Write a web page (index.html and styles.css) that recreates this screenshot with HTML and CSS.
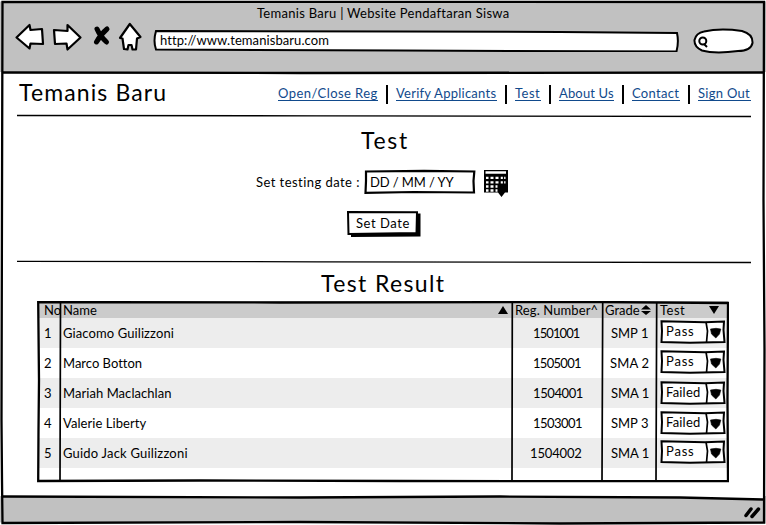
FILE: index.html
```html
<!DOCTYPE html>
<html lang="en">
<head>
<meta charset="utf-8">
<title>Temanis Baru | Website Pendaftaran Siswa</title>
<link rel="stylesheet" href="styles.css">
</head>
<body>
<div class="window">
  <header class="chrome">
    <div class="window-title"><span class="t-title">Temanis Baru | Website Pendaftaran Siswa</span></div>
    <div class="toolbar">
      <svg class="nav-icons" width="130" height="34" viewBox="14 20 130 34">
        <g fill="#fff" stroke="#000" stroke-width="2.200" stroke-linejoin="round">
          <path d="M16.500 37.500L29.500 25L30.500 30L42 29L43 44L30.500 43.500L29.500 48.500Z"/>
          <path d="M54 30L67.500 31L67.500 25L80.500 37.500L67.500 49.500L66.500 43.500L55 44Z"/>
          <path d="M129.800 24L140.500 37L137 38.500L136 49.500L132.500 49.500L131.500 45L128.500 45L127.500 49.500L124 49L122.500 38.500L120 38Z"/>
        </g>
        <path d="M97 29Q100 36 106.500 42M107 29Q101 34 96.500 42" fill="none" stroke="#000" stroke-width="5" stroke-linecap="round"/>
      </svg>
      <div class="address">
        <svg class="sketch" width="526" height="23" viewBox="153 29 526 23"><path d="M156 31L400 31.500L560 32L677 33Q679 42 676.500 51.500L400 50.500L156 49.500Q153 41 156 31Z" fill="#fff" stroke="#000" stroke-width="2"/></svg>
        <span class="t-url">http://www.temanisbaru.com</span>
      </div>
      <svg class="search" width="62" height="26" viewBox="692 28 62 26">
        <path d="M704 31.500Q720 28 742 31Q753 34 752.500 43Q751 51 738 51Q715 54 702 50.500Q694 47 694.500 40Q696 33 704 31.500Z" fill="#fff" stroke="#000" stroke-width="2"/>
        <circle cx="702.800" cy="41" r="3.500" fill="none" stroke="#000" stroke-width="2"/><path d="M704 44L707 47" stroke="#000" stroke-width="2"/>
      </svg>
    </div>
  </header>

  <main class="page">
    <div class="masthead">
      <h1 class="brand">Temanis Baru</h1>
      <nav class="menu">
        <a class="n-reg">Open/Close Reg</a><i></i><a class="n-verify">Verify Applicants</a><i></i><a class="n-test">Test</a><i></i><a class="n-about">About Us</a><i></i><a class="n-contact">Contact</a><i></i><a class="n-out">Sign Out</a>
      </nav>
    </div>
    <svg class="rule" width="734" height="4" viewBox="0 0 734 4"><path d="M0 1.500L300 1.800L734 2.500" stroke="#000" stroke-width="1.300"/></svg>

    <section class="schedule">
      <h2>Test</h2>
      <div class="date-row">
        <label>Set testing date :</label>
        <div class="date-field">
          <svg class="sketch" width="112" height="26" viewBox="0 0 112 26"><path d="M2 2.500L60 1.800L110.300 2.500L109.500 12L110 23.500L50 23L1.500 23.800L2 12Z" fill="#fff" stroke="#000" stroke-width="2.200"/></svg>
          <span class="t-date">DD / MM / YY</span>
        </div>
        <svg class="calendar" width="26" height="28" viewBox="0 0 26 28">
          <path d="M1 1H25V23.500H22L18.500 28L15 23.500H1Z"/>
          <path d="M2.500 3.500H23M3 8.800H5.500M7.500 8.800H10.500M12.500 8.800H15.500M17.500 8.800H22.500M3 13.300H5.500M7.500 13.300H10.500M12.500 13.300H15.500M17.500 13.300H22.500M3 17.500H5.500M7.500 17.500H10.500M12.500 17.500H14.500M3 21.500H5.500M7.500 21.500H10.500M12.500 21.500H14.500" stroke="#fff" stroke-width="2.300"/>
          <path d="M17 7V20" stroke="#000"/><path d="M20.500 7V16" stroke="#000" stroke-width="1.300"/>
        </svg>
      </div>
      <button class="set-date">
        <svg class="sketch" width="76" height="28" viewBox="0 0 76 28"><path d="M5 4L74.500 3.500V26.500L5 27Z"/><path d="M2 2L71 2.300L70.500 23L2.500 24Z" fill="#fff" stroke="#000" stroke-width="2"/></svg>
        <span>Set Date</span>
      </button>
    </section>
    <svg class="rule" width="734" height="4" viewBox="0 0 734 4"><path d="M0 1.300L300 1.800L734 2.500" stroke="#000" stroke-width="1.300"/></svg>

    <section class="results">
      <h2>Test Result</h2>
      <div class="table">
        <div class="row head">
          <div>No</div>
          <div><span>Name</span><svg class="sort-up" width="10" height="8"><path d="M0 8L5 0L10 8Z"/></svg></div>
          <div class="h-num">Reg. Number^</div>
          <div><span>Grade</span><svg class="sort-both" width="10" height="10"><path d="M0 4.500L5 0L10 4.500ZM0 6L5 10L10 6Z"/></svg></div>
          <div><span class="h-test">Test</span><svg class="sort-down" width="10" height="8"><path d="M0 0H10L5 8Z"/></svg></div>
        </div>
        <div class="row"><div>1</div><div class="p1">Giacomo Guilizzoni</div><div class="num r1">1501001</div><div class="grade">SMP 1</div><div><div class="select"><svg class="sketch" width="66" height="24"><use href="#select"/></svg><span class="pass">Pass</span></div></div></div>
        <div class="row"><div>2</div><div class="p2">Marco Botton</div><div class="num r2">1505001</div><div class="grade g2">SMA 2</div><div><div class="select"><svg class="sketch" width="66" height="24"><use href="#select"/></svg><span class="pass">Pass</span></div></div></div>
        <div class="row"><div>3</div><div class="p3">Mariah Maclachlan</div><div class="num r3">1504001</div><div class="grade">SMA 1</div><div><div class="select low"><svg class="sketch" width="66" height="24"><use href="#select"/></svg><span class="failed">Failed</span></div></div></div>
        <div class="row"><div>4</div><div class="p4">Valerie Liberty</div><div class="num r4">1503001</div><div class="grade">SMP 3</div><div><div class="select low"><svg class="sketch" width="66" height="24"><use href="#select"/></svg><span class="failed">Failed</span></div></div></div>
        <div class="row"><div>5</div><div class="p5">Guido Jack Guilizzoni</div><div class="num r5">1504002</div><div class="grade">SMA 1</div><div><div class="select"><svg class="sketch" width="66" height="24"><use href="#select"/></svg><span class="pass">Pass</span></div></div></div>
        <svg class="grid-lines" width="692" height="182" viewBox="37 301 692 182" fill="none" stroke="#000">
          <path d="M38.200 302L280 302.500L600 302L728 303L727.500 400L728 481.200L400 481L200 480.500L38.200 481L38.500 430L39 380Z" stroke-width="2.300"/>
          <path d="M60.500 303L60 482M512.300 303L512 481M602.700 303L602 482M656.700 303L656 482" stroke-width="1.700"/>
        </svg>
      </div>
    </section>
  </main>

  <footer class="status"></footer>
  <svg class="frame" width="766" height="525" viewBox="0 0 766 525" fill="none" stroke="#000">
    <path d="M3 495H763V499.500L680 497.500L500 496.500L300 497.500L3 496.500Z" fill="#fff" stroke="none"/>
    <path d="M0 525V522.500H400L766 523.500V525ZM0 0H766V1.500H0Z" fill="#fff" stroke="none"/>
    <path d="M2.500 2L400 1.800L764 2L763.500 200L764.500 350L764 522.500L560 523.500L300 522L2.500 523L2 480L1.500 420L2 200Z" stroke-width="2.300"/>
    <path d="M3 72.500L300 73L763 72.500" stroke-width="2.300"/>
    <path d="M3 496.500L300 497.500L500 496.500L680 497.500L763 499.500" stroke-width="2.300"/>
    <path d="M746 515.500L751 509M752 516.500L758.500 509" stroke-width="3.500" stroke-linecap="round"/>
  </svg>
</div>
<svg width="0" height="0" class="defs"><defs><g id="select"><path d="M1.500 1.300L45 2.300L64 1.500L63.500 10L64.500 22L30 22.800L1.500 22L2 11Z" fill="#fff" stroke="#000" stroke-width="2"/><path d="M46 2L47.500 11L46.500 22.500" fill="none" stroke="#000" stroke-width="1.700"/><path d="M50.500 9L56 8.300L60.800 9L59.500 14L55.800 18L51.500 14Z" stroke="#000" stroke-width=".6"/></g></defs></svg>
</body>
</html>
```
FILE: styles.css
```css
* { box-sizing: border-box; }
body { margin: 0; background: #fff; overflow: hidden; font: 13px/16px Lato, "Open Sans", sans-serif; color: #000; font-variant-ligatures: none; }
svg { display: block; flex: none; }
h1, h2 { margin: 0; font-weight: 400; white-space: nowrap; }
span, a, label { white-space: nowrap; }
.window { position: relative; width: 766px; height: 525px; display: flex; flex-direction: column; overflow: hidden; }
.frame, .sketch, .grid-lines { position: absolute; left: 0; top: 0; }
.defs { position: absolute; }

.chrome { height: 72px; background: #c1c1c1; }
.window-title { height: 20px; padding: 5px 0 0 257px; letter-spacing: .28px; }
.toolbar { display: flex; padding-left: 14px; }
.address { position: relative; width: 526px; height: 23px; margin: 9px 0 0 9px; padding: 3px 0 0 7px; }
.address span, .date-field span, .set-date span, .select span { position: relative; }
.t-url { letter-spacing: .08px; }
.search { margin: 8px 0 0 13px; }

.page { height: 424px; padding-left: 17px; }
.masthead { display: flex; height: 42px; padding: 6px 15px 0 2px; justify-content: space-between; }
.brand { font-size: 23px; line-height: 28px; letter-spacing: 1.12px; }
.menu { display: flex; padding-top: 7px; }
.menu a { height: 16px; color: #114a8c; border-bottom: 1px solid #114a8c; line-height: 17px; }
.menu i { width: 2px; height: 19px; margin: 0 8px; background: #000; }
.n-reg { width: 100px; letter-spacing: .43px; }
.n-verify { width: 101px; letter-spacing: .25px; }
.n-test { width: 26px; letter-spacing: .5px; }
.n-about { width: 55px; letter-spacing: .15px; }
.n-contact { width: 48px; letter-spacing: .3px; }
.n-out { width: 53px; letter-spacing: .3px; }

h2 { font-size: 23px; line-height: 28px; letter-spacing: 1.38px; }
.schedule { height: 142px; }
.schedule h2 { padding: 8px 0 0 344px; letter-spacing: 1.7px; }
.date-row { display: flex; height: 42px; margin-top: 14px; padding-left: 239px; }
.date-row label { width: 108px; padding-top: 6px; letter-spacing: .45px; }
.date-field { position: relative; width: 112px; height: 26px; margin-top: 1px; padding: 5px 0 0 6px; letter-spacing: -.1px; }
.calendar { margin: 1px 0 0 7px; }
.set-date { position: relative; display: block; width: 76px; height: 28px; margin-left: 329px; padding: 0 0 3px 10px; border: 0; background: none; font: inherit; color: inherit; text-align: left; letter-spacing: .55px; }

.results h2 { padding: 5px 0 0 304px; }
.table { position: relative; width: 692px; height: 182px; margin: 4px 0 0 20px; }
.row { display: grid; grid-template-columns: 23px 452px 90px 54px 71px; height: 30px; width: 690px; margin-left: 1px; line-height: 31px; white-space: nowrap; }
.row > div { padding-left: 2px; position: relative; }
.row > div:first-child { padding-left: 6px; }
.row > div:last-child { padding-left: 3px; }
.row:nth-child(even) { background: #ededed; }
.row.head { height: 17px; background: #cbcbcb; line-height: 18px; }
.head > div { display: flex; align-items: center; }
.h-num { letter-spacing: .1px; }
.h-test { letter-spacing: .5px; }
.sort-up { margin-left: auto; margin-right: 5px; }
.sort-down { margin-left: auto; margin-right: 9px; }
.sort-both { margin-left: 1px; }
.p1 { letter-spacing: .1px; }
.p3, .p4 { letter-spacing: .06px; }
.p5 { letter-spacing: .2px; }
.row > .num { padding-left: 20px; }
.r1 { letter-spacing: -.9px; }
.r2 { letter-spacing: -.7px; }
.r3 { letter-spacing: -.4px; }
.r4 { letter-spacing: -.55px; }
.row > .r5 { padding-left: 17px; letter-spacing: -.15px; }
.row > .grade { padding-left: 8px; }
.row > .g2 { padding-left: 7px; letter-spacing: .2px; }
.select { position: relative; width: 66px; height: 24px; margin-top: 2px; line-height: 22px; padding-left: 6px; }
.select.low { margin-top: 3px; }
.pass { letter-spacing: .8px; }
.failed { letter-spacing: .2px; }

.status { flex: 1; background: #c1c1c1; }
```
